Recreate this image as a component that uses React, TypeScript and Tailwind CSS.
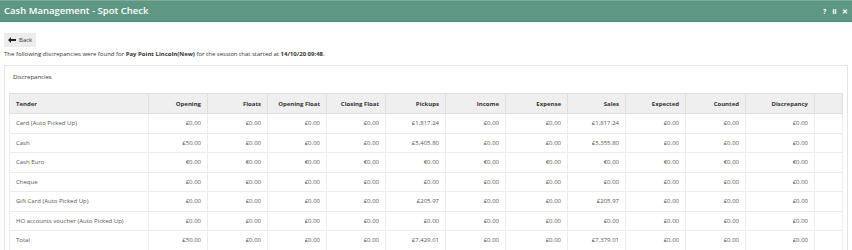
import React from "react";

const cols = [
  { name: "Tender", w: 139, left: true },
  { name: "Opening", w: 59 },
  { name: "Floats", w: 60 },
  { name: "Opening Float", w: 59 },
  { name: "Closing Float", w: 59 },
  { name: "Pickups", w: 60 },
  { name: "Income", w: 60 },
  { name: "Expense", w: 62 },
  { name: "Sales", w: 58 },
  { name: "Expected", w: 60 },
  { name: "Counted", w: 60 },
  { name: "Discrepancy", w: 69 },
  { name: "", w: 28 },
];

const rows: string[][] = [
  ["Card (Auto Picked Up)", "£0.00", "£0.00", "£0.00", "£0.00", "£1,817.24", "£0.00", "£0.00", "£1,817.24", "£0.00", "£0.00", "£0.00"],
  ["Cash", "£50.00", "£0.00", "£0.00", "£0.00", "£5,405.80", "£0.00", "£0.00", "£5,355.80", "£0.00", "£0.00", "£0.00"],
  ["Cash Euro", "€0.00", "€0.00", "€0.00", "€0.00", "€0.00", "€0.00", "€0.00", "€0.00", "€0.00", "€0.00", "€0.00"],
  ["Cheque", "£0.00", "£0.00", "£0.00", "£0.00", "£0.00", "£0.00", "£0.00", "£0.00", "£0.00", "£0.00", "£0.00"],
  ["Gift Card (Auto Picked Up)", "£0.00", "£0.00", "£0.00", "£0.00", "£205.97", "£0.00", "£0.00", "£205.97", "£0.00", "£0.00", "£0.00"],
  ["HO accounts voucher (Auto Picked Up)", "£0.00", "£0.00", "£0.00", "£0.00", "£0.00", "£0.00", "£0.00", "£0.00", "£0.00", "£0.00", "£0.00"],
  ["Total", "£50.00", "£0.00", "£0.00", "£0.00", "£7,429.01", "£0.00", "£0.00", "£7,379.01", "£0.00", "£0.00", "£0.00"],
];

export default function App() {
  return (
    <div className="w-[852px] h-[250px] overflow-hidden bg-white text-[#333] leading-none" style={{ fontFamily: '"Open Sans", "Liberation Sans", sans-serif' }}>
      <div className="h-[22px] bg-[#5f9785] border-t border-[#7aab9b] border-b border-b-[#55887a] flex items-center justify-between pl-[4px] pr-[4px] text-white">
        <span className="text-[9.5px] font-semibold leading-none">Cash Management - Spot Check</span>
        <div className="flex items-center gap-[6px] text-[7px] font-bold leading-none">
          <span>?</span>
          <span className="tracking-[-0.5px]">II</span>
          <span>✕</span>
        </div>
      </div>
      <div className="pl-[4px] pt-[11px]">
        <div className="flex w-fit items-center gap-[3px] h-[14px] px-[4px] bg-[#ececec] text-[6px] text-[#333]">
          <svg width="8" height="6" viewBox="0 0 8 6" className="fill-[#222]">
            <path d="M0 3 L3 0 L3 2 L8 2 L8 4 L3 4 L3 6 Z" />
          </svg>
          <span>Back</span>
        </div>
        <div className="text-[6px] leading-[8px] mt-[3px]">
          The following discrepancies were found for <b>Pay Point Lincoln(New)</b> for the session that started at <b>14/10/20 09:48</b>.
        </div>
      </div>
      <div className="ml-[4px] mt-[7px] w-[844px] border border-[#e3e3e3] pt-[6px] px-[4px]">
        <div className="text-[6px] pl-[4px] h-[10px] leading-[10px]">Discrepancies</div>
        <table className="mt-[11px] table-fixed border-collapse w-[833px] text-[6px]">
          <colgroup>
            {cols.map((c, i) => (
              <col key={i} style={{ width: c.w }} />
            ))}
          </colgroup>
          <thead>
            <tr className="h-[20px] bg-[#efefef]">
              {cols.map((c, i) => (
                <th key={i} className={`border border-[#dedede] px-[6px] font-bold text-[#333] ${c.left ? "text-left" : "text-right"}`}>
                  {c.name}
                </th>
              ))}
            </tr>
          </thead>
          <tbody>
            {rows.map((r, ri) => (
              <tr key={ri} className="h-[19.5px]">
                {r.map((v, ci) => (
                  <td key={ci} className={`border border-[#ececec] px-[6px] text-[#555] ${ci === 0 ? "text-left" : "text-right"}`}>
                    {v}
                  </td>
                ))}
                <td className="border border-[#ececec]"></td>
              </tr>
            ))}
          </tbody>
        </table>
      </div>
    </div>
  );
}
